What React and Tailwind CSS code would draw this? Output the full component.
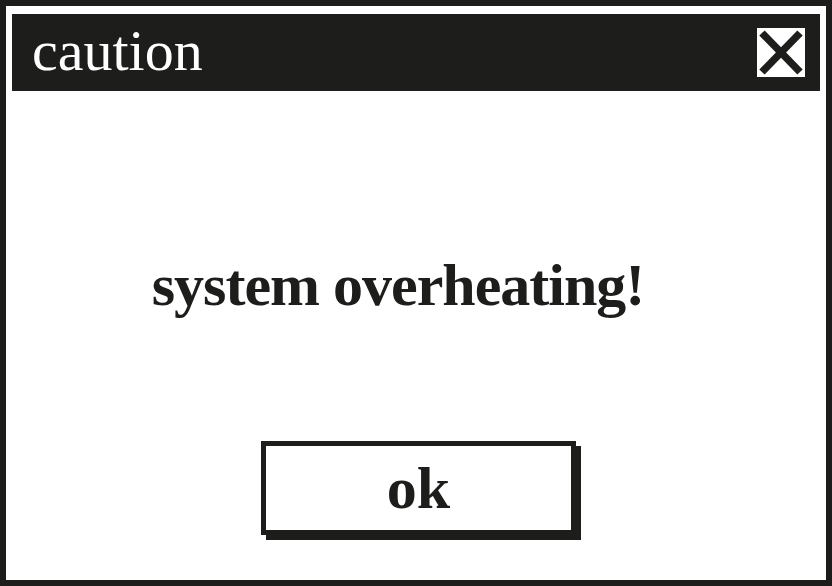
import React from "react";

function CloseBox() {
  return (
    <button className="w-[48px] h-[49px] bg-white flex items-center justify-center">
      <svg width="48" height="49" viewBox="0 0 48 49">
        <line x1="5" y1="5" x2="43" y2="44" stroke="#1d1d1b" strokeWidth="7.5" />
        <line x1="43" y1="5" x2="5" y2="44" stroke="#1d1d1b" strokeWidth="7.5" />
      </svg>
    </button>
  );
}

export default function App() {
  return (
    <div
      className="w-[832px] h-[586px] bg-white border-[6px] border-[#1d1d1b] px-[6px] pt-[8px] flex flex-col"
      style={{ fontFamily: '"Liberation Serif", "Times New Roman", serif' }}
    >
      {/* Title bar */}
      <div className="h-[77px] bg-[#1d1d1b] flex items-center justify-between pl-[20px] pr-[15px]">
        <span className="text-white text-[58px] leading-none pb-[4px]">caution</span>
        <CloseBox />
      </div>

      {/* Body */}
      <div className="flex flex-col items-center pt-[164px]">
        <p className="text-[#1d1d1b] text-[60px] font-bold leading-none tracking-[-1px] pr-[36px]">
          system overheating!
        </p>
        <button className="mt-[126px] ml-[5px] w-[315px] h-[94px] border-[5px] border-[#1d1d1b] bg-white shadow-[5px_5px_0_#1d1d1b] flex items-center justify-center">
          <span className="text-[#1d1d1b] text-[60px] font-bold leading-none">ok</span>
        </button>
      </div>
    </div>
  );
}
